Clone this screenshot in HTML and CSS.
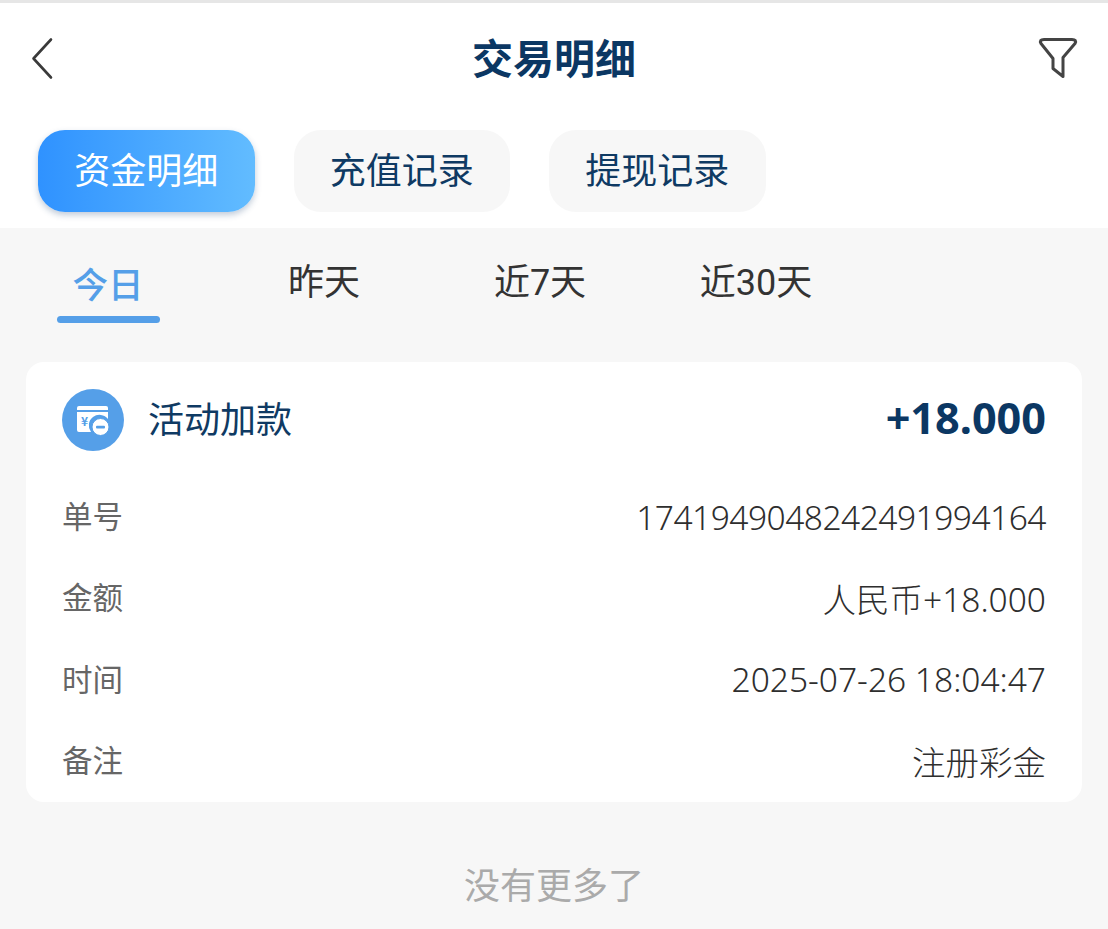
FILE: index.html
```html
<!DOCTYPE html>
<html>

<head>
    <meta charset="UTF-8">
    <meta name="viewport" content="width=device-width, initial-scale=1">
    <title>交易明细</title>
    <link rel="stylesheet" href="styles.css">
</head>

<body>
    <!-- white top part -->
    <div class="top">
        <header class="nav-bar">
            <svg class="nav-icon" width="60" height="60" viewBox="0 0 60 60" fill="none">
                <path d="M29 10.5 L11.5 29.5 L29 48.5" stroke="#3a3a3a" stroke-width="2.6" stroke-linecap="round" stroke-linejoin="round" />
            </svg>
            <h1 class="nav-title">交易明细</h1>
            <svg class="nav-icon" width="60" height="60" viewBox="0 0 60 60" fill="none">
                <path d="M18 10.5 H46 Q51 10.5 49 14.5 L37 28.5 V47.5 L27 39.5 V29.5 L15 14.5 Q13 10.5 18 10.5 Z" stroke="#444" stroke-width="3" stroke-linejoin="round" />
            </svg>
        </header>
        <div class="type-tabs">
            <div class="type-tab type-tab-active">资金明细</div>
            <div class="type-tab">充值记录</div>
            <div class="type-tab">提现记录</div>
        </div>
    </div>

    <!-- date filter -->
    <div class="date-tabs">
        <div class="date-tab date-tab-active"><span class="date-label">今日</span></div>
        <div class="date-tab"><span class="date-label">昨天</span></div>
        <div class="date-tab"><span class="date-label">近7天</span></div>
        <div class="date-tab"><span class="date-label">近30天</span></div>
    </div>

    <!-- record -->
    <div class="card">
        <div class="card-head">
            <svg class="card-icon" width="62" height="62" viewBox="0 0 62 62">
                <circle cx="31" cy="31" r="31" fill="#559fe8" />
                <path d="M15 19 Q15 17 17 17 H44 Q46 17 46 19 V21 H15 Z" fill="#fff" />
                <path d="M15 23 H46 V30 A10.5 10.5 0 0 0 29 43 H17 Q15 43 15 41 Z" fill="#fff" />
                <text class="card-icon-yen" x="22.5" y="36.5">¥</text>
                <circle cx="38.5" cy="38" r="8.5" fill="#fff" stroke="#559fe8" stroke-width="1" />
                <rect x="34" y="36.7" width="9" height="2.8" rx="1" fill="#559fe8" />
            </svg>
            <span class="card-title">活动加款</span>
            <span class="card-amount">+18.000</span>
        </div>
        <div class="card-rows">
            <div class="row"><span class="row-label">单号</span><span class="row-value row-value-long">1741949048242491994164</span></div>
            <div class="row"><span class="row-label">金额</span><span class="row-value">人民币+18.000</span></div>
            <div class="row"><span class="row-label">时间</span><span class="row-value">2025-07-26 18:04:47</span></div>
            <div class="row"><span class="row-label">备注</span><span class="row-value">注册彩金</span></div>
        </div>
    </div>

    <div class="no-more">没有更多了</div>
</body>

</html>
```

FILE: styles.css
```css
* {
    box-sizing: border-box;
    font-family: "Noto Sans CJK SC", sans-serif;
}

html,
body {
    height: 100%;
}

body {
    margin: 0;
    background-color: #f7f7f7;
    overflow: hidden;
}

.top {
    background-color: #fff;
    border-top: 3px solid #e6e6e6;
    height: 228px;
    padding: 0 22px 0 38px;
}

.nav-bar {
    display: flex;
    align-items: center;
    justify-content: space-between;
    height: 112px;
    margin-left: -16px;
}

.nav-icon {
    flex-shrink: 0;
}

.nav-title {
    margin: 0 0 6px;
    color: #0b3763;
    font-size: 41px;
    font-weight: 700;
    line-height: 56px;
}

.type-tabs {
    display: flex;
    gap: 39px;
    margin-top: 15px;
}

.type-tab {
    display: flex;
    align-items: center;
    justify-content: center;
    width: 216.5px;
    height: 82px;
    padding-bottom: 7px;
    border-radius: 27px;
    background-color: #f7f7f7;
    color: #0f3a63;
    font-size: 36px;
}

.type-tab-active {
    background: linear-gradient(90deg, #2f92ff, #62bcff);
    box-shadow: 0 3px 6px rgba(30, 70, 120, 0.28);
    color: #fff;
}

.date-tabs {
    display: grid;
    grid-template-columns: repeat(4, 216px);
    height: 134px;
    padding-top: 28px;
}

.date-tab {
    display: flex;
    justify-content: center;
    align-items: flex-start;
}

.date-label {
    display: block;
    min-width: 103px;
    color: #333;
    font-family: Roboto, "Noto Sans CJK SC", sans-serif;
    font-size: 36px;
    line-height: 54px;
    text-align: center;
}

.date-tab-active .date-label {
    color: #559fe8;
    font-family: "Noto Sans CJK SC", sans-serif;
    font-size: 35.5px;
    font-weight: 500;
}

.date-tab-active .date-label::after {
    content: "";
    display: block;
    height: 7px;
    margin-top: 6px;
    border-radius: 4px;
    background-color: #559fe8;
}

.card {
    margin: 0 26px;
    height: 440px;
    border-radius: 18px;
    background-color: #fff;
}

.card-head {
    display: flex;
    align-items: center;
    height: 115px;
    padding: 0 36px;
}

.card-icon {
    flex-shrink: 0;
}

.card-icon-yen {
    fill: #559fe8;
    font-size: 12px;
    font-weight: 700;
    text-anchor: middle;
}

.card-title {
    margin: 0 0 6px 24px;
    color: #0f3a63;
    font-size: 36px;
    line-height: 50px;
}

.card-amount {
    margin: 0 0 4px auto;
    color: #0b3763;
    font-family: "Noto Sans", sans-serif;
    font-size: 43.2px;
    font-weight: 700;
}

.row {
    display: flex;
    align-items: center;
    justify-content: space-between;
    height: 81.25px;
    padding: 0 36px 2px;
}

.row-label {
    margin-bottom: 3px;
    color: #666;
    font-size: 30.5px;
}

.row-value {
    color: #2e2e2e;
    font-family: "Noto Sans", "Noto Sans CJK SC", sans-serif;
    font-size: 33.5px;
    font-weight: 300;
}

.row-value-long {
    letter-spacing: -0.5px;
}

.no-more {
    margin-top: 51px;
    color: #aaa;
    font-size: 36px;
    line-height: 60px;
    text-align: center;
}
```
